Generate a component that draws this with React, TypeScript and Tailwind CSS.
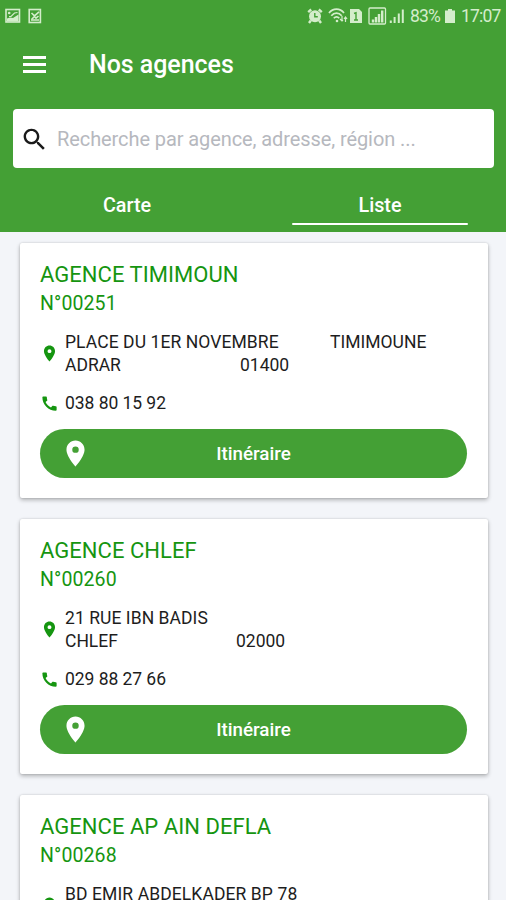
import type { ReactNode } from "react";

type Agency = { name: string; code: string; lines: ReactNode[]; phone?: string };

const PIN =
  "M12 2C8.13 2 5 5.13 5 9c0 5.25 7 13 7 13s7-7.75 7-13c0-3.87-3.13-7-7-7zm0 9.5a2.5 2.5 0 0 1 0-5 2.5 2.5 0 0 1 0 5z";
const PHONE =
  "M20.01 15.38c-1.23 0-2.42-.2-3.53-.56-.35-.12-.74-.03-1.01.24l-1.57 1.97c-2.83-1.35-5.48-3.9-6.89-6.83l1.95-1.66c.27-.28.35-.67.24-1.02-.37-1.11-.56-2.3-.56-3.53 0-.54-.45-.99-.99-.99H4.19C3.65 3 3 3.24 3 3.99 3 13.28 10.73 21 20.01 21c.71 0 .99-.63.99-1.18v-3.45c0-.54-.45-.99-.99-.99z";
const SEARCH =
  "M15.5 14h-.79l-.28-.27C15.41 12.59 16 11.11 16 9.5 16 5.91 13.09 3 9.5 3S3 5.91 3 9.5 5.91 16 9.5 16c1.61 0 3.09-.59 4.23-1.57l.27.28v.79l5 4.99L20.49 19l-4.99-5zm-6 0C7.01 14 5 11.99 5 9.5S7.01 5 9.5 5 14 7.01 14 9.5 11.99 14 9.5 14z";

function Icon({ d, className }: { d: string; className: string }) {
  return (
    <svg viewBox="0 0 24 24" className={className} fill="currentColor">
      <path d={d} />
    </svg>
  );
}

const agencies: Agency[] = [
  {
    name: "AGENCE TIMIMOUN",
    code: "N°00251",
    lines: [
      <>
        <span className="w-[265px] tracking-[0.08px]">PLACE DU 1ER NOVEMBRE</span>
        <span>TIMIMOUNE</span>
      </>,
      <>
        <span className="w-[175px]">ADRAR</span>
        <span>01400</span>
      </>,
    ],
    phone: "038 80 15 92",
  },
  {
    name: "AGENCE CHLEF",
    code: "N°00260",
    lines: [
      <span className="tracking-[0.06px]">21 RUE IBN BADIS</span>,
      <>
        <span className="w-[171px]">CHLEF</span>
        <span>02000</span>
      </>,
    ],
    phone: "029 88 27 66",
  },
  {
    name: "AGENCE AP AIN DEFLA",
    code: "N°00268",
    lines: [<span className="tracking-[0.1px]">BD EMIR ABDELKADER BP 78</span>],
  },
];

function StatusBar() {
  return (
    <div className="flex h-8 items-center justify-between pl-[5px] pr-[5px] text-[#d4edcb]">
      <div className="flex items-center gap-[7px]">
        <svg viewBox="0 0 16 16" className="h-4 w-4" fill="none" stroke="currentColor">
          <rect x="1" y="1.5" width="13.5" height="12.5" strokeWidth="1.6" />
          <path d="M2 13.5V10.500l3-1 3 .5 5.5-3.500v7z" fill="currentColor" stroke="none" />
          <circle cx="4.2" cy="5" r="1.3" fill="currentColor" stroke="none" />
          <path d="M4 8.5h2L9.5 5l3-.5" strokeWidth="1.2" />
        </svg>
        <svg viewBox="0 0 14 16" className="h-4 w-[14px]" fill="none" stroke="currentColor">
          <rect x="1.2" y="1.5" width="11.2" height="13" strokeWidth="1.6" />
          <path d="M3.5 5 6.500 7.800l4.500-4M3.5 11.500 6.500 8.500l1.500 1.700L10.500 8" strokeWidth="1.6" />
          <path d="M3 12h8" strokeWidth="1.5" />
        </svg>
      </div>
      <div className="flex items-center">
        <svg viewBox="0 0 16 16" className="mr-[5px] h-4 w-4" fill="none" stroke="currentColor">
          <circle cx="8" cy="8.3" r="6" fill="currentColor" stroke="none" />
          <path d="M1.2 4.2 4.2 1.5M14.8 4.2 11.8 1.5M3.8 12.5 2 15M12.2 12.5 14 15" strokeWidth="2.4" />
          <path d="M7.8 5v3.8h3" stroke="#44a035" strokeWidth="1.4" />
        </svg>
        <svg viewBox="0 0 20 16" className="mr-px h-4 w-5" fill="none" stroke="currentColor" strokeWidth="1.7">
          <path d="M1 5C5-.1 12-.1 16 5M3.3 7.8c3-3.7 7.4-3.7 10.4 0M5.8 10.3c1.7-2 3.8-2 5.5 0" />
          <circle cx="9" cy="13" r="1.3" fill="currentColor" stroke="none" />
          <path d="M14 8v5m-2-2 2 2 1-1M17.5 14V9m-1.5 2 1.5-2 1.6 2" strokeWidth="1.2" />
        </svg>
        <svg viewBox="0 0 14 16" className="mr-[5px] h-4 w-[14px]">
          <path d="M1 1h9l3 3v11H1z" fill="currentColor" />
          <path d="M5 5.5 7 4.7v7.6M5 12h4" stroke="#44a035" strokeWidth="1.4" fill="none" />
        </svg>
        <svg viewBox="0 0 38 18" className="mr-[4px] h-[18px] w-[38px]" fill="none" stroke="currentColor">
          <rect x="1" y="1" width="16.5" height="16" rx="1" strokeWidth="1.3" />
          <path d="M5 15.5v-3M8 15.5V10M11 15.5V7M14.2 15.5V3.5" strokeWidth="2.4" />
          <path d="M22.8 16v-2.5M26.6 16v-6M30.8 16V6.5M34.8 16V2.5" strokeWidth="2" />
        </svg>
        <span className="w-[29px] whitespace-nowrap pt-px text-[17.5px] leading-none tracking-[-0.85px]">83%</span>
        <svg viewBox="0 0 12 16" className="ml-[5px] mr-[5px] h-4 w-3" fill="currentColor">
          <path d="M4 1h4v1.5h3V15H1V2.500h3z" />
        </svg>
        <span className="w-[40px] whitespace-nowrap pt-px text-[17.5px] leading-none tracking-[-0.8px]">17:07</span>
      </div>
    </div>
  );
}

function AgencyCard({ agency }: { agency: Agency }) {
  return (
    <article className="h-[255.5px] shrink-0 rounded-[2px] bg-white px-5 pt-[16px] shadow-[0_2px_4px_rgba(0,0,0,0.28),0_0_2px_rgba(0,0,0,0.15)]">
      <h2 className="h-[30px] whitespace-nowrap text-[22px] leading-[32px] tracking-[0.04px] text-[#159510]">{agency.name}</h2>
      <p className="h-[26px] text-[19.5px] leading-[29px] tracking-[0.1px] text-[#159510]">{agency.code}</p>
      <div className="mt-[16px] flex h-[46px]">
        <Icon d={PIN} className="mr-[6px] mt-[13.5px] h-[19px] w-[19px] shrink-0 text-[#159510]" />
        <div className="whitespace-nowrap text-[17.5px] leading-[23px] text-[#1d1d1d]">
          {agency.lines.map((line, i) => (
            <div key={i} className="flex">{line}</div>
          ))}
        </div>
      </div>
      {agency.phone && (
        <>
          <div className="mt-[15px] flex h-[23px] items-center">
            <Icon d={PHONE} className="mr-[6px] mt-px h-[19px] w-[19px] shrink-0 text-[#159510]" />
            <span className="text-[17.5px] leading-[23px] tracking-[-0.05px] text-[#1d1d1d]">{agency.phone}</span>
          </div>
          <button className="mt-[14.5px] flex h-[49px] w-[427px] items-center rounded-full bg-[#44a035] text-white">
            <Icon d={PIN} className="ml-[20px] h-[31px] w-[31px]" />
            <span className="w-[325px] pt-[2px] text-center text-[18.8px] font-medium">Itinéraire</span>
          </button>
        </>
      )}
    </article>
  );
}

export default function App() {
  return (
    <div className="flex h-[900px] w-[506px] flex-col overflow-hidden bg-[#f3f5f9] font-[Roboto,sans-serif]">
      <header className="h-[232px] shrink-0 bg-[#44a035] text-white">
        <StatusBar />
        <div className="flex h-[64px] items-center pl-[23px]">
          <div className="flex w-[66px] flex-col gap-[4px]">
            <span className="h-[3px] w-[23px] bg-white" />
            <span className="h-[3px] w-[23px] bg-white" />
            <span className="h-[3px] w-[23px] bg-white" />
          </div>
          <h1 className="pt-px text-[25px] font-medium tracking-[-0.05px]">Nos agences</h1>
        </div>
        <div className="mx-[13px] mt-[13px] flex h-[59px] w-[481px] items-center rounded-[4px] bg-white pl-[7px]">
          <Icon d={SEARCH} className="mt-[2px] h-[29px] w-[29px] text-[#1a1a1a]" />
          <span className="ml-[8px] whitespace-nowrap text-[20px] tracking-[-0.09px] text-[#b6b8be]">Recherche par agence, adresse, région ...</span>
        </div>
        <nav className="flex h-[58px] text-[19.8px] font-medium">
          <div className="flex w-[254px] justify-center pt-[23px]">Carte</div>
          <div className="flex w-[252px] flex-col items-center pt-[23px]">
            <span>Liste</span>
            <span className="mt-[2px] h-[2.500px] w-[176px] rounded-full bg-white" />
          </div>
        </nav>
      </header>
      <main className="flex min-h-0 flex-1 flex-col gap-[20.5px] overflow-hidden pl-5 pr-[18px] pt-[10.5px]">
        {agencies.map((a) => (
          <AgencyCard key={a.code} agency={a} />
        ))}
      </main>
    </div>
  );
}
